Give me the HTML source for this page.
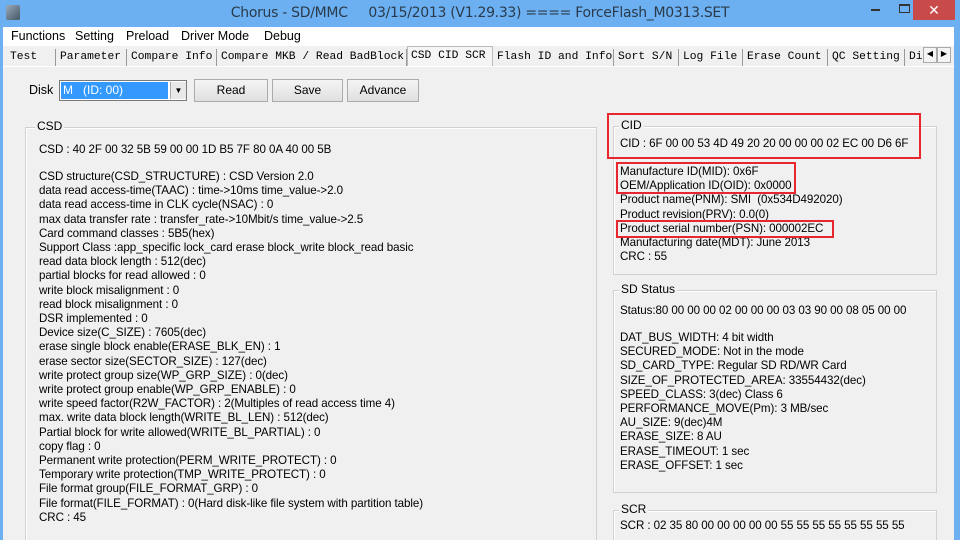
<!DOCTYPE html>
<html><head><meta charset="utf-8"><style>
*{margin:0;padding:0;box-sizing:border-box}
html,body{width:960px;height:540px;overflow:hidden}
body{background:#6cb0f2;font-family:"Liberation Sans",Arial,sans-serif;position:relative}
.abs{position:absolute}
.title{left:0;top:0;width:960px;height:27px;font-family:"DejaVu Sans","Liberation Sans",sans-serif;font-size:14px;color:#2a3a4a;text-align:center;line-height:26px;letter-spacing:-0.3px}
.close{left:913px;top:0;width:42px;height:20px;background:#c94a4a;color:#fff;font-size:14px;text-align:center;line-height:20px}
.client{left:3px;top:27px;width:951px;height:513px;background:#f0f0f0}
.menu{left:3px;top:27px;width:951px;height:19px;background:#fff;font-size:12.5px;color:#000}
.menu span{position:absolute;top:2px}
.tabs{font-family:"Liberation Mono",monospace;font-size:11.3px;color:#000}
.tab{position:absolute;top:49px;height:17px;border-right:1px solid #999;line-height:17px;padding-left:4px;white-space:nowrap;overflow:hidden}
.tabsel{position:absolute;top:46px;height:21px;background:#f5f5f5;border:1px solid #bbb;border-bottom:none;line-height:19px;padding-left:3px;white-space:nowrap}
.btn{position:absolute;top:79px;height:23px;background:linear-gradient(#f4f4f4,#e0e0e0);border:1px solid #acacac;font-size:12px;text-align:center;line-height:21px}
.grp{position:absolute;border:1px solid #d0d0d0;box-shadow:1px 1px 0 #fff inset}
.lg{position:absolute;background:#f0f0f0;font-size:12px;padding:0 2px;color:#000}
.txt{position:absolute;font-size:11.6px;line-height:14.2px;color:#000;letter-spacing:-0.08px;white-space:pre}
.red{position:absolute;border:2px solid #e8262d}
</style></head><body>
<div class="abs title">Chorus - SD/MMC &nbsp;&nbsp;&nbsp;&nbsp;03/15/2013 (V1.29.33) ==== ForceFlash_M0313.SET</div>
<div class="abs" style="left:6px;top:5px;width:14px;height:15px;background:linear-gradient(135deg,#9ab 0%,#456 100%);border-radius:2px"></div>
<div class="abs" style="left:871px;top:9px;width:9px;height:2px;background:#333"></div>
<div class="abs" style="left:899px;top:4px;width:11px;height:9px;border:1px solid #333;border-top:2px solid #333"></div>
<div class="abs close">✕</div>
<div class="abs client"></div>
<div class="abs menu"><span style="left:8px">Functions</span><span style="left:72px">Setting</span><span style="left:123px">Preload</span><span style="left:178px">Driver Mode</span><span style="left:261px">Debug</span></div>
<div class="tabs">
<div class="tab" style="left:6px;width:50px">Test</div>
<div class="tab" style="left:56px;width:71px">Parameter</div>
<div class="tab" style="left:127px;width:90px">Compare Info</div>
<div class="tab" style="left:217px;width:190px">Compare MKB / Read BadBlock</div>
<div class="tabsel" style="left:407px;width:86px">CSD CID SCR</div>
<div class="tab" style="left:493px;width:121px">Flash ID and Info</div>
<div class="tab" style="left:614px;width:65px">Sort S/N</div>
<div class="tab" style="left:679px;width:64px">Log File</div>
<div class="tab" style="left:743px;width:85px">Erase Count</div>
<div class="tab" style="left:828px;width:77px">QC Setting</div>
<div class="tab" style="left:905px;width:20px;border:none">Di</div>
<div class="abs" style="left:923px;top:47px;width:14px;height:16px;border:1px solid #aaa;background:#f4f4f4;font-size:8px;text-align:center;line-height:14px">◀</div>
<div class="abs" style="left:937px;top:47px;width:14px;height:16px;border:1px solid #aaa;background:#f4f4f4;font-size:8px;text-align:center;line-height:14px">▶</div>
</div>
<div class="abs" style="left:3px;top:66px;width:951px;height:1px;background:#fff"></div>
<div class="abs" style="left:29px;top:83px;font-size:12.5px">Disk</div>
<div class="abs" style="left:59px;top:80px;width:128px;height:21px;border:1px solid #7a7a7a;background:#fff"></div>
<div class="abs" style="left:61px;top:82px;width:107px;height:17px;background:#3399ff;color:#fff;font-size:12px;line-height:17px;padding-left:2px">M &nbsp;&nbsp;(ID: 00)</div>
<div class="abs" style="left:170px;top:82px;width:16px;height:17px;background:#e8e8e8;border-left:1px solid #aaa;font-size:8px;text-align:center;line-height:17px">▼</div>
<div class="btn" style="left:194px;width:74px">Read</div>
<div class="btn" style="left:272px;width:71px">Save</div>
<div class="btn" style="left:347px;width:72px">Advance</div>

<div class="grp" style="left:25px;top:127px;width:572px;height:420px"></div>
<div class="lg" style="left:35px;top:119px">CSD</div>
<div class="txt" style="left:39px;top:143px">CSD : 40 2F 00 32 5B 59 00 00 1D B5 7F 80 0A 40 00 5B</div>
<div class="txt" style="left:39px;top:170px">CSD structure(CSD_STRUCTURE) : CSD Version 2.0
data read access-time(TAAC) : time->10ms time_value->2.0
data read access-time in CLK cycle(NSAC) : 0
max data transfer rate : transfer_rate->10Mbit/s time_value->2.5
Card command classes : 5B5(hex)
Support Class :app_specific lock_card erase block_write block_read basic
read data block length : 512(dec)
partial blocks for read allowed : 0
write block misalignment : 0
read block misalignment : 0
DSR implemented : 0
Device size(C_SIZE) : 7605(dec)
erase single block enable(ERASE_BLK_EN) : 1
erase sector size(SECTOR_SIZE) : 127(dec)
write protect group size(WP_GRP_SIZE) : 0(dec)
write protect group enable(WP_GRP_ENABLE) : 0
write speed factor(R2W_FACTOR) : 2(Multiples of read access time 4)
max. write data block length(WRITE_BL_LEN) : 512(dec)
Partial block for write allowed(WRITE_BL_PARTIAL) : 0
copy flag : 0
Permanent write protection(PERM_WRITE_PROTECT) : 0
Temporary write protection(TMP_WRITE_PROTECT) : 0
File format group(FILE_FORMAT_GRP) : 0
File format(FILE_FORMAT) : 0(Hard disk-like file system with partition table)
CRC : 45</div>

<div class="grp" style="left:613px;top:126px;width:324px;height:149px"></div>
<div class="lg" style="left:619px;top:118px">CID</div>
<div class="txt" style="left:620px;top:137px">CID : 6F 00 00 53 4D 49 20 20 00 00 00 02 EC 00 D6 6F</div>
<div class="txt" style="left:620px;top:165px">Manufacture ID(MID): 0x6F
OEM/Application ID(OID): 0x0000
Product name(PNM): SMI  (0x534D492020)
Product revision(PRV): 0.0(0)
Product serial number(PSN): 000002EC
Manufacturing date(MDT): June 2013
CRC : 55</div>
<div class="red" style="left:607px;top:113px;width:314px;height:46px"></div>
<div class="red" style="left:616px;top:162px;width:180px;height:32px"></div>
<div class="red" style="left:616px;top:220px;width:218px;height:18px"></div>

<div class="grp" style="left:613px;top:290px;width:324px;height:203px"></div>
<div class="lg" style="left:619px;top:282px">SD Status</div>
<div class="txt" style="left:620px;top:304px">Status:80 00 00 00 02 00 00 00 03 03 90 00 08 05 00 00</div>
<div class="txt" style="left:620px;top:331px">DAT_BUS_WIDTH: 4 bit width
SECURED_MODE: Not in the mode
SD_CARD_TYPE: Regular SD RD/WR Card
SIZE_OF_PROTECTED_AREA: 33554432(dec)
SPEED_CLASS: 3(dec) Class 6
PERFORMANCE_MOVE(Pm): 3 MB/sec
AU_SIZE: 9(dec)4M
ERASE_SIZE: 8 AU
ERASE_TIMEOUT: 1 sec
ERASE_OFFSET: 1 sec</div>

<div class="grp" style="left:613px;top:510px;width:324px;height:40px"></div>
<div class="lg" style="left:619px;top:502px">SCR</div>
<div class="txt" style="left:620px;top:519px">SCR : 02 35 80 00 00 00 00 00 55 55 55 55 55 55 55 55</div>
<div class="abs" style="left:954px;top:27px;width:6px;height:513px;background:#6cb0f2"></div>
</body></html>
